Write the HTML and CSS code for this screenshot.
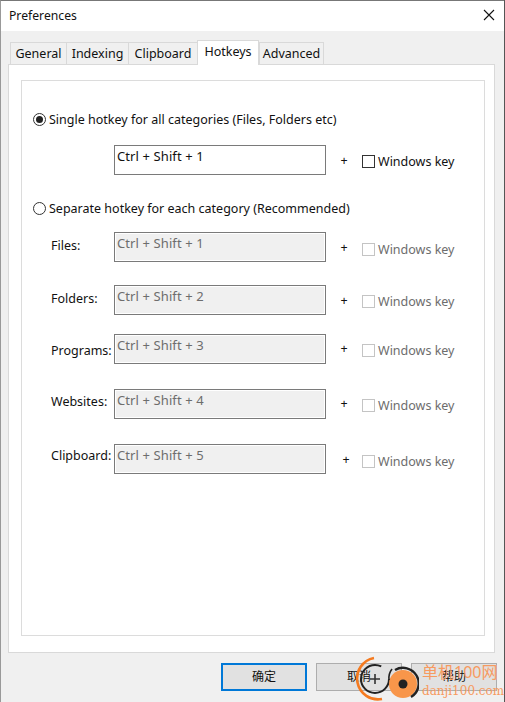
FILE: index.html
```html
<!DOCTYPE html>
<html lang="en">
<head>
  <meta charset="UTF-8" />
  <title>Preferences</title>
  <link rel="stylesheet" href="styles.css">
</head>
<body>
  <div class="window">
    <div class="titlebar">
      <span class="title">Preferences</span>
      <svg class="close" width="12" height="12" viewBox="0 0 12 12"><path d="M1 1 L11 11 M11 1 L1 11" stroke="#111" stroke-width="1.1" fill="none" /></svg>
    </div>

    <div class="content">
      <div class="tabs">
        <div class="tab tab-general">General</div>
        <div class="tab tab-indexing">Indexing</div>
        <div class="tab tab-clipboard">Clipboard</div>
        <div class="tab tab-hotkeys active">Hotkeys</div>
        <div class="tab tab-advanced">Advanced</div>
      </div>

      <div class="panel">
        <div class="box">
          <div class="choice choice-first"><span class="radio checked"></span>Single hotkey for all categories (Files, Folders etc)</div>
          <div class="row row-single">
            <div class="field">Ctrl + Shift + 1</div>
            <span class="plus">+</span>
            <span class="winkey"><span class="check"></span>Windows key</span>
          </div>

          <div class="choice choice-second"><span class="radio"></span>Separate hotkey for each category (Recommended)</div>
          <div class="row row-files disabled">
            <span class="label">Files:</span>
            <div class="field">Ctrl + Shift + 1</div>
            <span class="plus">+</span>
            <span class="winkey"><span class="check"></span>Windows key</span>
          </div>
          <div class="row row-folders disabled">
            <span class="label">Folders:</span>
            <div class="field">Ctrl + Shift + 2</div>
            <span class="plus">+</span>
            <span class="winkey"><span class="check"></span>Windows key</span>
          </div>
          <div class="row row-programs disabled">
            <span class="label">Programs:</span>
            <div class="field">Ctrl + Shift + 3</div>
            <span class="plus">+</span>
            <span class="winkey"><span class="check"></span>Windows key</span>
          </div>
          <div class="row row-websites disabled">
            <span class="label">Websites:</span>
            <div class="field">Ctrl + Shift + 4</div>
            <span class="plus">+</span>
            <span class="winkey"><span class="check"></span>Windows key</span>
          </div>
          <div class="row row-clipboard disabled">
            <span class="label">Clipboard:</span>
            <div class="field">Ctrl + Shift + 5</div>
            <span class="plus">+</span>
            <span class="winkey"><span class="check"></span>Windows key</span>
          </div>
        </div>
      </div>

      <div class="buttons">
        <div class="btn default">确定</div>
        <div class="btn">取消</div>
        <div class="btn">帮助</div>
      </div>
    </div>
  </div>

  <div class="watermark">
    <svg class="wm-logo" width="64" height="46" viewBox="0 0 64 46">
      <path d="M19 2 A20 20 0 0 0 27 43" stroke="#f47a20" stroke-width="2.6" fill="none" />
      <circle cx="20" cy="23" r="14" stroke="#222" stroke-width="2" fill="none" stroke-dasharray="72 16" />
      <path d="M15 23 H25 M20 18 V28" stroke="#333" stroke-width="1.6" fill="none" />
      <circle cx="48" cy="28" r="14" fill="#f8964a" />
      <path d="M40 14 A15 15 0 0 1 56 41" stroke="#222" stroke-width="2.4" fill="none" />
      <path d="M37 13 A15 15 0 0 0 34 24" stroke="#222" stroke-width="1.6" fill="none" />
      <circle cx="48" cy="28" r="4.5" fill="#222" />
    </svg>
    <div class="wm-title">单机100网</div>
    <div class="wm-site">danji100.com</div>
  </div>
</body>
</html>
```

FILE: styles.css
```css
* {
  box-sizing: border-box;
}

body {
  margin: 0;
  width: 505px;
  height: 702px;
  overflow: hidden;
  background: #555;
  font-family: "Noto Sans", "Noto Sans CJK SC", sans-serif;
  font-size: 12.5px;
  color: #111;
}

.window {
  width: 504px;
  height: 702px;
  border-top: 1px solid #777;
  border-left: 1px solid #999;
  display: flex;
  flex-direction: column;
  background: #f0f0f0;
}

.titlebar {
  height: 30px;
  flex: none;
  background: #fff;
  display: flex;
  align-items: center;
  justify-content: space-between;
  padding: 0 9px 2px 8px;
}

.title {
  font-size: 12.2px;
}

.content {
  flex: 1;
  padding: 10px 9px 0 7px;
  display: flex;
  flex-direction: column;
}

.tabs {
  display: flex;
  height: 23px;
  align-items: flex-end;
  padding-left: 2px;
  position: relative;
  z-index: 1;
}

.tab {
  height: 22px;
  border: 1px solid #d9d9d9;
  border-bottom: none;
  border-right: none;
  text-align: center;
  line-height: 21px;
  background: #f0f0f0;
}

.tab-general { width: 56px; }
.tab-indexing { width: 62px; }
.tab-clipboard { width: 69px; }
.tab-hotkeys { width: 62px; }
.tab-advanced { width: 65px; border-right: 1px solid #d9d9d9; }

.tab.active {
  height: 25px;
  margin-bottom: -1px;
  background: #fff;
  line-height: 22px;
  border-right: 1px solid #d9d9d9;
}

.panel {
  height: 589px;
  flex: none;
  background: #fff;
  border: 1px solid #d9d9d9;
  padding: 15px 9px 0 12px;
}

.box {
  height: 556px;
  border: 1px solid #dcdcdc;
  padding-left: 11px;
}

.choice {
  display: flex;
  align-items: center;
  height: 20px;
  white-space: nowrap;
}

.choice-first { margin-top: 28px; }
.choice-second { margin-top: 23px; }

.radio {
  width: 13px;
  height: 13px;
  border: 1px solid #333;
  border-radius: 50%;
  margin-right: 3px;
  flex: none;
  display: flex;
  align-items: center;
  justify-content: center;
}

.radio.checked::after {
  content: "";
  width: 7px;
  height: 7px;
  border-radius: 50%;
  background: #222;
}

.row {
  display: flex;
  align-items: flex-start;
  height: 30px;
  padding-left: 18px;
  white-space: nowrap;
}

.row-single { margin-top: 16px; padding-left: 81px; }
.row-files { margin-top: 14px; }
.row-folders { margin-top: 23px; }
.row-programs { margin-top: 19px; }
.row-websites { margin-top: 25px; }
.row-clipboard { margin-top: 25px; }

.label {
  width: 63px;
  flex: none;
  line-height: 18px;
}

.row-files .label { margin-top: 5px; }
.row-folders .label { margin-top: 5px; }
.row-programs .label { margin-top: 8px; }
.row-websites .label { margin-top: 4px; }
.row-clipboard .label { margin-top: 3px; }

.field {
  width: 212px;
  height: 30px;
  flex: none;
  border: 1px solid #7a7a7a;
  background: #fff;
  padding-left: 2px;
  line-height: 20px;
  font-size: 13px;
  letter-spacing: 0.1px;
}

.plus {
  width: 36px;
  flex: none;
  text-align: center;
  margin-top: 7px;
  line-height: 18px;
  color: #111;
}

.row-programs .plus,
.row-websites .plus { margin-top: 6px; }

.row-clipboard .plus { padding-left: 4px; }

.winkey {
  display: flex;
  align-items: center;
  height: 18px;
  margin-top: 7px;
}

.check {
  width: 13px;
  height: 13px;
  border: 1px solid #333;
  margin-right: 3px;
  background: #fff;
}

.disabled .field {
  background: #f0f0f0;
  color: #6d6d6d;
  box-shadow: inset 0 0 0 1px #fff;
}

.disabled .winkey {
  color: #6d6d6d;
}

.row-files .winkey,
.row-clipboard .winkey { margin-top: 8px; }

.disabled .check {
  border-color: #c4c4c4;
}

.buttons {
  display: flex;
  gap: 9px;
  justify-content: flex-end;
  margin-top: 10px;
  margin-right: -2px;
}

.btn {
  width: 86px;
  height: 28px;
  background: #e1e1e1;
  border: 1px solid #adadad;
  text-align: center;
  line-height: 25px;
  font-size: 12px;
}

.btn.default {
  border: 2px solid #0078d7;
  line-height: 23px;
}

/* site stamp laid over the corner of the screenshot */
.watermark {
  position: absolute;
  left: 355px;
  top: 656px;
  width: 150px;
  height: 46px;
}

.wm-logo {
  position: absolute;
  left: 0;
  top: 0;
}

.wm-title {
  position: absolute;
  left: 67px;
  top: 4px;
  font-size: 16px;
  line-height: 24px;
  color: #f79a5f;
  white-space: nowrap;
}

.wm-site {
  position: absolute;
  left: 67px;
  top: 27px;
  font-family: "DejaVu Serif", serif;
  font-size: 12px;
  line-height: 16px;
  color: #f79a5f;
  white-space: nowrap;
}
```
